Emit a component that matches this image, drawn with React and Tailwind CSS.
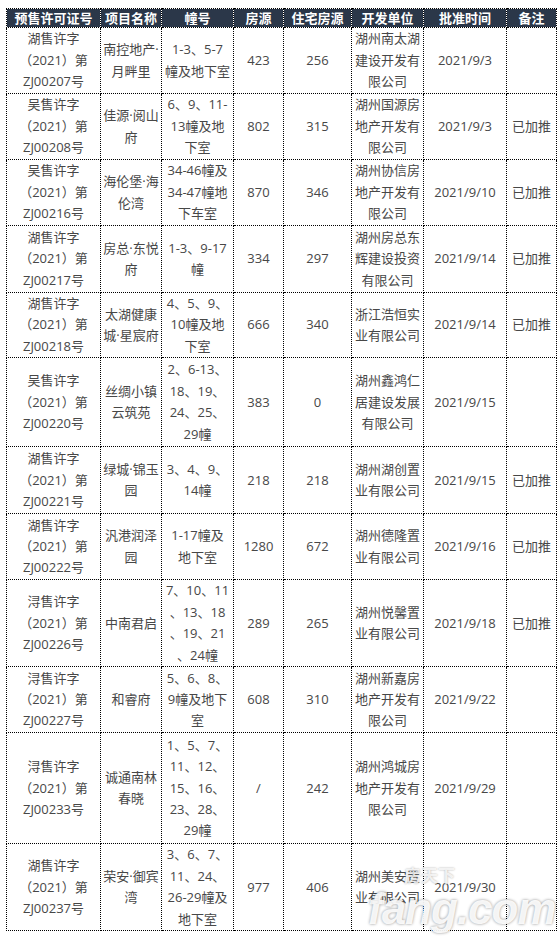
const rows = [
  { h: 66, no: "湖售许字", zj: "ZJ00207号", name: ["南控地产·", "月畔里"], bld: ["1-3、5-7", "幢及地下室"], total: "423", res: "256", dev: ["湖州南太湖", "建设开发有", "限公司"], date: "2021/9/3", note: "" },
  { h: 66, no: "吴售许字", zj: "ZJ00208号", name: ["佳源·阅山", "府"], bld: ["6、9、11-", "13幢及地", "下室"], total: "802", res: "315", dev: ["湖州国源房", "地产开发有", "限公司"], date: "2021/9/3", note: "已加推" },
  { h: 66, no: "吴售许字", zj: "ZJ00216号", name: ["海伦堡·海", "伦湾"], bld: ["34-46幢及", "34-47幢地", "下车室"], total: "870", res: "346", dev: ["湖州协信房", "地产开发有", "限公司"], date: "2021/9/10", note: "已加推" },
  { h: 67, no: "湖售许字", zj: "ZJ00217号", name: ["房总·东悦", "府"], bld: ["1-3、9-17", "幢"], total: "334", res: "297", dev: ["湖州房总东", "辉建设投资", "有限公司"], date: "2021/9/14", note: "已加推" },
  { h: 64, no: "湖售许字", zj: "ZJ00218号", name: ["太湖健康", "城·星宸府"], bld: ["4、5、9、", "10幢及地", "下室"], total: "666", res: "340", dev: ["浙江浩恒实", "业有限公司"], date: "2021/9/14", note: "已加推" },
  { h: 89, no: "吴售许字", zj: "ZJ00220号", name: ["丝绸小镇", "云筑苑"], bld: ["2、6-13、", "18、19、", "24、25、", "29幢"], total: "383", res: "0", dev: ["湖州鑫鸿仁", "居建设发展", "有限公司"], date: "2021/9/15", note: "" },
  { h: 67, no: "湖售许字", zj: "ZJ00221号", name: ["绿城·锦玉", "园"], bld: ["3、4、9、", "14幢"], total: "218", res: "218", dev: ["湖州湖创置", "业有限公司"], date: "2021/9/15", note: "已加推" },
  { h: 66, no: "湖售许字", zj: "ZJ00222号", name: ["汎港润泽", "园"], bld: ["1-17幢及", "地下室"], total: "1280", res: "672", dev: ["湖州德隆置", "业有限公司"], date: "2021/9/16", note: "已加推" },
  { h: 87, no: "浔售许字", zj: "ZJ00226号", name: ["中南君启"], bld: ["7、10、11", "、13、18", "、19、21", "、24幢"], total: "289", res: "265", dev: ["湖州悦馨置", "业有限公司"], date: "2021/9/18", note: "已加推" },
  { h: 66, no: "浔售许字", zj: "ZJ00227号", name: ["和睿府"], bld: ["5、6、8、", "9幢及地下", "室"], total: "608", res: "310", dev: ["湖州新嘉房", "地产开发有", "限公司"], date: "2021/9/22", note: "" },
  { h: 111, no: "浔售许字", zj: "ZJ00233号", name: ["诚通南林", "春晓"], bld: ["1、5、7、", "11、12、", "15、16、", "23、28、", "29幢"], total: "/", res: "242", dev: ["湖州鸿城房", "地产开发有", "限公司"], date: "2021/9/29", note: "" },
  { h: 87, no: "湖售许字", zj: "ZJ00237号", name: ["荣安·御宾", "湾"], bld: ["3、6、7、", "11、24、", "26-29幢及", "地下室"], total: "977", res: "406", dev: ["湖州美安置", "业有限公司"], date: "2021/9/30", note: "" },
];

const heads = ["预售许可证号", "项目名称", "幢号", "房源", "住宅房源", "开发单位", "批准时间", "备注"];

const cell = "p-0 text-center align-middle whitespace-nowrap border-r border-b border-dotted border-black bg-clip-padding";

const Lines = ({ items }) => (
  <>
    {items.map((t, i) => (
      <div key={i}>{t}</div>
    ))}
  </>
);

export default function App() {
  return (
    <div className="relative min-h-[937px] bg-white pt-2 pl-[6px] font-['Open_Sans','Noto_Sans_CJK_SC',sans-serif] text-[13px] leading-[21.4px] text-[#474747]">
      <table className="table-fixed border-separate border-spacing-0 w-[551px]">
        <colgroup>
          <col className="w-[95px]" />
          <col className="w-[61px]" />
          <col className="w-[72px]" />
          <col className="w-[50px]" />
          <col className="w-[68px]" />
          <col className="w-[72px]" />
          <col className="w-[83px]" />
          <col className="w-[50px]" />
        </colgroup>
        <thead>
          <tr className="h-[20px]">
            {heads.map((h, i) => (
              <th
                key={h}
                className={`${cell} border-t bg-[#2b3749] text-white font-bold leading-[18px] ${i === 0 ? "border-l" : ""}`}
              >
                {h}
              </th>
            ))}
          </tr>
        </thead>
        <tbody>
          {rows.map((r) => (
            <tr key={r.zj} style={{ height: r.h }}>
              <td className={`${cell} border-l`}>
                <Lines items={[r.no, "（2021）第", r.zj]} />
              </td>
              <td className={cell}>
                <Lines items={r.name} />
              </td>
              <td className={cell}>
                <Lines items={r.bld} />
              </td>
              <td className={cell}>{r.total}</td>
              <td className={cell}>{r.res}</td>
              <td className={cell}>
                <Lines items={r.dev} />
              </td>
              <td className={cell}>{r.date}</td>
              <td className={cell}>{r.note}</td>
            </tr>
          ))}
        </tbody>
      </table>

      {/* watermark */}
      <div className="absolute left-[368px] top-[866px] pointer-events-none select-none">
        <div className="ml-[36px] text-[17px] leading-[20px] font-bold text-white/80 [text-shadow:0_0_2px_rgba(0,0,0,0.35)]">
          房天下
        </div>
        <div className="text-[44px] leading-[46px] font-bold italic tracking-[-1px] font-['Liberation_Sans',sans-serif] text-white/90 [text-shadow:0_0_3px_rgba(0,0,0,0.45)]">
          fang.com
        </div>
      </div>
    </div>
  );
}
